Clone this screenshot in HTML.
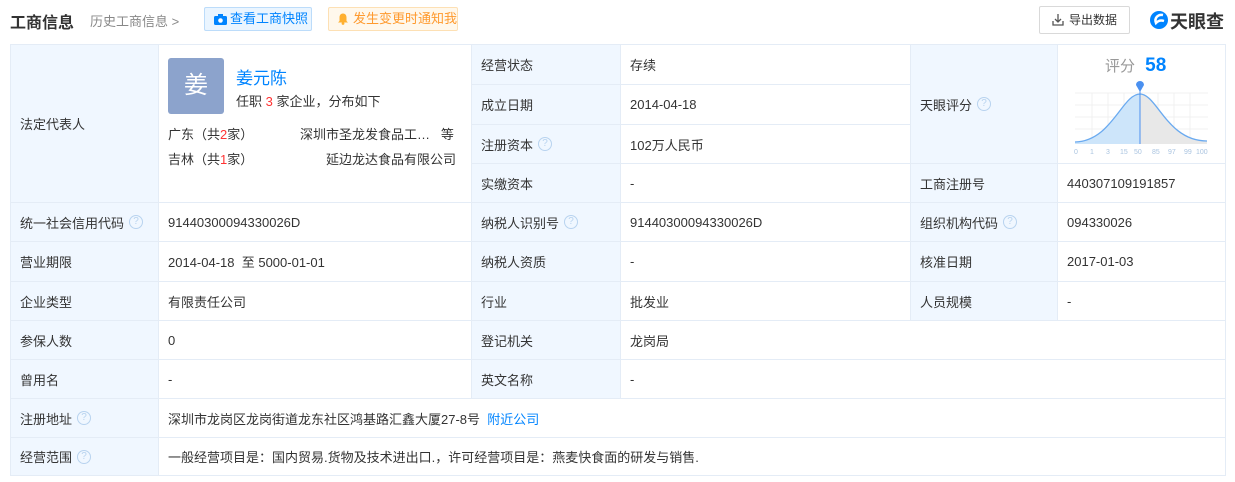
<!DOCTYPE html>
<html><head><meta charset="utf-8"><style>
body{margin:0;background:#fff;font-family:"Liberation Sans","Noto Sans CJK SC",sans-serif;font-size:13px;color:#333;width:1235px;height:482px;overflow:hidden;position:relative}
.hd{position:absolute;top:0;left:0;right:0;height:40px}
.hd div{white-space:nowrap}
.t{position:absolute;left:10px;top:9px;font-size:16px;font-weight:bold;color:#333}
.h2{position:absolute;left:90px;top:11px;font-size:13px;color:#888}
.b1{position:absolute;left:204px;top:7px;width:108px;height:24px;border:1px solid #bcdcfa;background:#eaf5ff;border-radius:2px;color:#0084ff;font-size:13px;line-height:22px;box-sizing:border-box;padding-left:25px}
.b2{position:absolute;left:328px;top:7px;width:130px;height:24px;border:1px solid #fde0b4;background:#fff8ec;border-radius:2px;color:#ff9a2e;font-size:13px;line-height:22px;box-sizing:border-box;padding-left:24px}
.ex{position:absolute;left:1039px;top:6px;width:91px;height:28px;border:1px solid #d9d9d9;border-radius:2px;box-sizing:border-box;line-height:26px;padding-left:29px;font-size:12px;color:#333}
.logo{position:absolute;left:1170px;top:8px;font-size:18px;font-weight:bold;color:#333}
table{position:absolute;left:10px;top:44px;border-collapse:collapse;table-layout:fixed}
td{border:1px solid #e4ecf6;padding:0 9px;vertical-align:middle;white-space:nowrap;overflow:hidden}
td.l{background:#f0f7ff;color:#333}
.q{display:inline-block;width:14px;height:14px;border:1px solid #b8d3ef;border-radius:50%;color:#b8d3ef;font-size:10px;line-height:12px;text-align:center;vertical-align:middle;margin-left:5px;box-sizing:border-box;position:relative;top:-2px}
a{color:#0084ff;text-decoration:none}
</style></head><body>
<div class="hd">
<div class="t">工商信息</div>
<div class="h2">历史工商信息 &gt;</div>
<div class="b1"><svg style="position:absolute;left:9px;top:6px" width="13" height="11"><rect x="0" y="2" width="13" height="9" rx="1.5" fill="#0084ff"/><rect x="4" y="0" width="5" height="3" fill="#0084ff"/><circle cx="6.5" cy="6.5" r="2.3" fill="#fff"/></svg>查看工商快照</div>
<div class="b2"><svg style="position:absolute;left:9px;top:5px" width="10" height="12"><path d="M5 0.5C2.5 0.5 1.5 2.5 1.5 4.5V8L0 9.5H10L8.5 8V4.5C8.5 2.5 7.5 0.5 5 0.5Z" fill="#ffb030"/><circle cx="5" cy="10.5" r="1.4" fill="#ffb030"/></svg>发生变更时通知我</div>
<div class="ex"><svg style="position:absolute;left:12px;top:7px" width="12" height="12"><path d="M6 0V8M3 5L6 8L9 5M1 7V11H11V7" stroke="#555" stroke-width="1.3" fill="none"/></svg>导出数据</div>
<svg style="position:absolute;left:1149px;top:10px" width="20" height="20"><circle cx="10" cy="10" r="9" fill="#0084ff"/><path d="M14 5C9 4 5 8 7 13C9 11 12 10 15 11" stroke="#fff" stroke-width="2.5" fill="none"/></svg>
<div class="logo">天眼查</div>
</div>
<table>
<colgroup><col style="width:148px"><col style="width:313px"><col style="width:149px"><col style="width:290px"><col style="width:147px"><col style="width:168px"></colgroup>
<tr style="height:40px"><td class="l" rowspan="4">法定代表人</td>
<td rowspan="4" style="vertical-align:top;padding:0;position:relative">
<div style="position:absolute;left:9px;top:13px;width:56px;height:56px;background:#8ca3cc;border-radius:3px;color:#fff;font-size:24px;line-height:56px;text-align:center">姜</div>
<div style="position:absolute;left:77px;top:19px;font-size:17px;color:#0084ff">姜元陈</div>
<div style="position:absolute;left:77px;top:46px">任职 <span style="color:#f33">3</span> 家企业，分布如下</div>
<div style="position:absolute;left:9px;top:79px">广东（共<span style="color:#f33">2</span>家）</div>
<div style="position:absolute;left:141px;top:79px">深圳市圣龙发食品工…&nbsp;&nbsp;&nbsp;等</div>
<div style="position:absolute;left:9px;top:104px">吉林（共<span style="color:#f33">1</span>家）</div>
<div style="position:absolute;left:167px;top:104px">延边龙达食品有限公司</div>
</td>
<td class="l">经营状态</td><td>存续</td>
<td class="l" rowspan="3">天眼评分<span class="q">?</span></td>
<td rowspan="3" style="padding:0;position:relative">
<div style="position:absolute;left:47px;top:10px;font-size:15px;color:#999;white-space:nowrap">评分 <span style="color:#0084ff;font-weight:bold;font-size:19px;margin-left:6px">58</span></div>
<svg style="position:absolute;left:14px;top:36px" width="140" height="76">
<g stroke="#f0f0f0" stroke-width="1"><line x1="3" y1="12" x2="136" y2="12"/><line x1="3" y1="24" x2="136" y2="24"/><line x1="3" y1="36" x2="136" y2="36"/><line x1="3" y1="48" x2="136" y2="48"/><line x1="20" y1="12" x2="20" y2="62"/><line x1="36" y1="12" x2="36" y2="62"/><line x1="52" y1="12" x2="52" y2="62"/><line x1="86" y1="12" x2="86" y2="62"/><line x1="102" y1="12" x2="102" y2="62"/><line x1="118" y1="12" x2="118" y2="62"/></g>
<path d="M68 13C85 13 95 60 135 60V63H68Z" fill="#e8e8e8"/>
<path d="M3 61C40 60 50 13 68 13V63H3Z" fill="#cde5fa"/>
<path d="M3 61C40 60 50 13 68 13C85 13 95 60 135 60" stroke="#6aaaf0" stroke-width="1.3" fill="none"/>
<line x1="68" y1="8" x2="68" y2="63" stroke="#4a90f0"/>
<path d="M68 11L64 4A4 4 0 1 1 72 4Z" fill="#4a90f0"/>
<text y="73" font-size="7" fill="#aac4e0" font-family="Liberation Sans"><tspan x="2">0</tspan><tspan x="18">1</tspan><tspan x="34">3</tspan><tspan x="48">15</tspan><tspan x="62">50</tspan><tspan x="80">85</tspan><tspan x="96">97</tspan><tspan x="112">99</tspan><tspan x="124">100</tspan></text>
</svg></td></tr>
<tr style="height:40px"><td class="l">成立日期</td><td>2014-04-18</td></tr>
<tr style="height:39px"><td class="l">注册资本<span class="q">?</span></td><td>102万人民币</td></tr>
<tr style="height:39px"><td class="l">实缴资本</td><td>-</td><td class="l">工商注册号</td><td>440307109191857</td></tr>
<tr style="height:39px"><td class="l">统一社会信用代码<span class="q">?</span></td><td>91440300094330026D</td><td class="l">纳税人识别号<span class="q">?</span></td><td>91440300094330026D</td><td class="l">组织机构代码<span class="q">?</span></td><td>094330026</td></tr>
<tr style="height:40px"><td class="l">营业期限</td><td>2014-04-18 &nbsp;至 5000-01-01</td><td class="l">纳税人资质</td><td>-</td><td class="l">核准日期</td><td>2017-01-03</td></tr>
<tr style="height:39px"><td class="l">企业类型</td><td>有限责任公司</td><td class="l">行业</td><td>批发业</td><td class="l">人员规模</td><td>-</td></tr>
<tr style="height:39px"><td class="l">参保人数</td><td>0</td><td class="l">登记机关</td><td colspan="3">龙岗局</td></tr>
<tr style="height:39px"><td class="l">曾用名</td><td>-</td><td class="l">英文名称</td><td colspan="3">-</td></tr>
<tr style="height:39px"><td class="l">注册地址<span class="q">?</span></td><td colspan="5">深圳市龙岗区龙岗街道龙东社区鸿基路汇鑫大厦27-8号 &nbsp;<a>附近公司</a></td></tr>
<tr style="height:38px"><td class="l">经营范围<span class="q">?</span></td><td colspan="5">一般经营项目是：国内贸易.货物及技术进出口.，许可经营项目是：燕麦快食面的研发与销售.</td></tr>
</table>
</body></html>
